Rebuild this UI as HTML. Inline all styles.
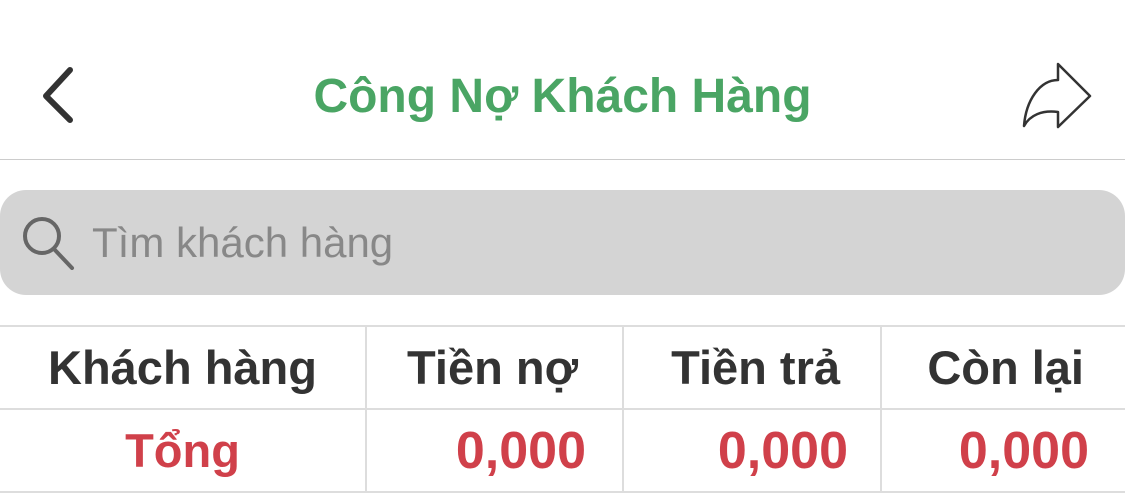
<!DOCTYPE html>
<html><head><meta charset="utf-8"><style>
body{margin:0;width:1125px;height:498px;background:#fff;font-family:"Liberation Sans",sans-serif;position:relative;overflow:hidden}
.t{position:absolute;top:67px;left:0;width:1125px;text-align:center;color:#4aa564;font-size:48px;font-weight:bold;line-height:60px}
.hl{position:absolute;top:159px;left:0;width:1125px;height:1px;background:#ccc}
.s{position:absolute;top:190px;left:0;width:1125px;height:105px;background:#d4d4d4;border-radius:26px}
.s span{position:absolute;left:92px;top:26px;font-size:42px;color:#888;line-height:54px}
table{position:absolute;top:325px;left:0;border-collapse:collapse;width:1127px;table-layout:fixed}
td{border:2px solid #ddd;height:81px;font-weight:bold;font-size:47px;color:#333;padding:0 40px 0 0;text-align:right;white-space:nowrap}
td:first-child{border-left:none;text-align:center;padding:0}
.r td{color:#d0404a}
.n{font-size:52px}
</style></head><body>
<svg style="position:absolute;left:38px;top:66px" width="40" height="60"><path d="M32 4 L8 30 L32 54" fill="none" stroke="#333" stroke-width="6" stroke-linecap="round" stroke-linejoin="round"/></svg>
<div class="t">Công Nợ Khách Hàng</div>
<svg style="position:absolute;left:1020px;top:60px" width="74" height="72"><path d="M4 66 C6 40 20 20 38 20 L38 4 L70 36 L38 67 L38 52 C22 50 10 55 4 66 Z" fill="none" stroke="#333" stroke-width="2.5" stroke-linejoin="round"/></svg>
<div class="hl"></div>
<div class="s"><svg style="position:absolute;left:20px;top:24px" width="56" height="56"><circle cx="22" cy="22" r="17" fill="none" stroke="#666" stroke-width="4"/><path d="M34 35 L52 54" stroke="#666" stroke-width="4" stroke-linecap="round"/></svg><span>Tìm khách hàng</span></div>
<table>
<colgroup><col style="width:366px"><col style="width:257px"><col style="width:258px"><col style="width:246px"></colgroup>
<tr><td>Khách hàng</td><td style="padding-right:44px">Tiền nợ</td><td>Tiền trả</td><td style="padding-right:42px">Còn lại</td></tr>
<tr class="r"><td>Tổng</td><td class="n" style="padding-right:36px">0,000</td><td class="n" style="padding-right:32px">0,000</td><td class="n" style="padding-right:37px">0,000</td></tr>
</table>
</body></html>
